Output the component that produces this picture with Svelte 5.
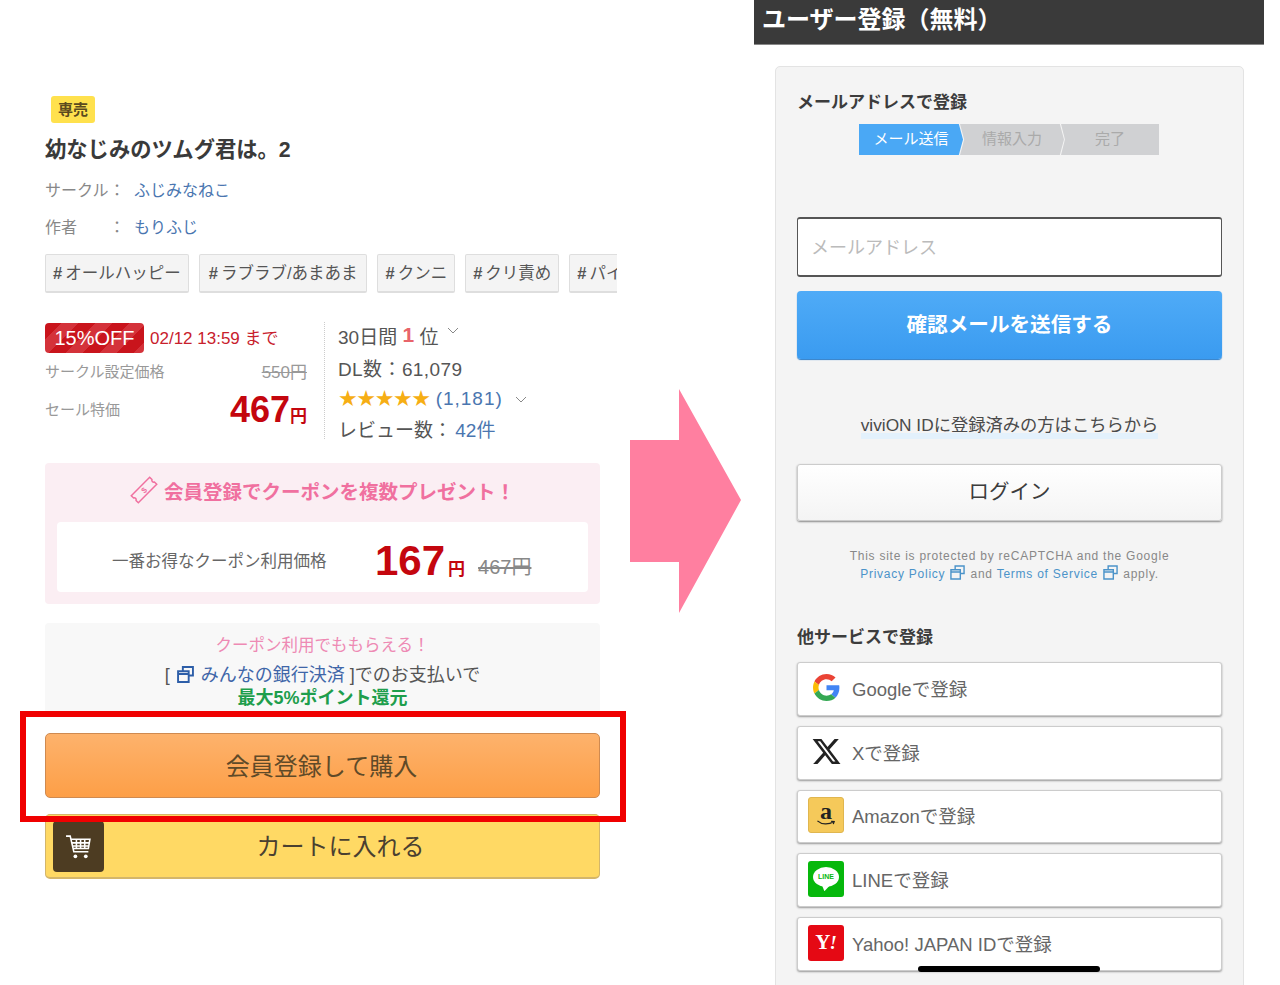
<script>
	const tags = ['オールハッピー', 'ラブラブ/あまあま', 'クンニ', 'クリ責め', 'パイズリ'];
	const steps = [
		{ label: 'メール送信', active: true },
		{ label: '情報入力', active: false },
		{ label: '完了', active: false }
	];
</script>

<div class="page">
	<section class="product">
		<span class="badge">専売</span>
		<h1>幼なじみのツムグ君は。2</h1>
		<div class="meta"><span class="key">サークル</span><span class="colon">：</span><span class="link">ふじみなねこ</span></div>
		<div class="meta second"><span class="key">作者</span><span class="colon">：</span><span class="link">もりふじ</span></div>
		<div class="tags">
			{#each tags as tag}
				<span class="tag"><b>#</b>{tag}</span>
			{/each}
		</div>

		<div class="prices">
			<div class="price-left">
				<div class="sale-row">
					<span class="off">15%OFF</span>
					<span class="until">02/12 13:59 まで</span>
				</div>
				<div class="price-row list">
					<span>サークル設定価格</span>
					<s>550円</s>
				</div>
				<div class="price-row now">
					<span>セール特価</span>
					<strong>467<small>円</small></strong>
				</div>
			</div>
			<div class="price-right">
				<div class="stat rank">30日間 <em>1</em> 位 <svg class="chev up" viewBox="0 0 12 7"><path d="M1 1l5 5 5-5" /></svg></div>
				<div class="stat dl">DL数：61,079</div>
				<div class="stat stars"><span class="star-row">★★★★★</span><span class="link count">(1,181)</span><svg class="chev" viewBox="0 0 12 7"><path d="M1 1l5 5 5-5" /></svg></div>
				<div class="stat reviews">レビュー数： <span class="link">42件</span></div>
			</div>
		</div>

		<div class="coupon">
			<div class="coupon-title">
				<svg class="ticket" viewBox="0 0 28 28">
					<g transform="rotate(-45 14 14)">
						<path d="M1 9h26v3.2a2 2 0 0 0 0 3.6V19H1v-3.2a2 2 0 0 0 0-3.6z" />
						<text x="14" y="17" text-anchor="middle">$</text>
					</g>
				</svg>
				<span>会員登録でクーポンを複数プレゼント！</span>
			</div>
			<div class="coupon-box">
				<span class="coupon-label">一番お得なクーポン利用価格</span>
				<strong>167<small>円</small></strong>
				<s>467円</s>
			</div>
		</div>

		<div class="bank">
			<div class="bank-pink">クーポン利用でももらえる！</div>
			<div class="bank-line">[ <svg class="ext" viewBox="0 0 16 16"><path d="M5.5 4.5V1h9.500v8h-4M1 5h10v10H1zM1 5h10v2.500H1z" /></svg> <span class="bank-link">みんなの銀行決済</span> ]でのお支払いで</div>
			<div class="bank-green">最大5%ポイント還元</div>
		</div>

		<div class="buy">会員登録して購入</div>
		<div class="cart">
			<span class="cart-icon">
				<svg viewBox="0 0 26 26">
					<path d="M1 3h4l3.500 15h14M6 6h18l-1.500 9H8M11 6v9M15 6v9M19 6v9M7 9.500h16.500M7.500 12.500h15.500" />
					<circle cx="10" cy="22.500" r="1.800" />
					<circle cx="20" cy="22.500" r="1.800" />
				</svg>
			</span>
			<span class="cart-label">カートに入れる</span>
		</div>

		<div class="highlight"></div>
	</section>

	<svg class="arrow" viewBox="0 0 111 224"><polygon points="0,51 49,51 49,0 111,111 49,224 49,173 0,173" /></svg>

	<section class="register">
		<header>ユーザー登録（無料）</header>
		<div class="card">
			<h2>メールアドレスで登録</h2>
			<div class="steps">
				{#each steps as step}
					<span class="step" class:active={step.active}>{step.label}</span>
				{/each}
			</div>
			<div class="input">メールアドレス</div>
			<div class="send">確認メールを送信する</div>
			<div class="vivion"><span>viviON IDに登録済みの方はこちらから</span></div>
			<div class="login">ログイン</div>
			<p class="captcha">
				This site is protected by reCAPTCHA and the Google<br />
				<span class="blue">Privacy Policy</span>
				<svg class="ext small" viewBox="0 0 16 16"><path d="M5.500 4.500V1h9.500v8h-4M1 5h10v10H1zM1 5h10v2.500H1z" /></svg>
				and <span class="blue">Terms of Service</span>
				<svg class="ext small" viewBox="0 0 16 16"><path d="M5.500 4.500V1h9.500v8h-4M1 5h10v10H1zM1 5h10v2.500H1z" /></svg>
				apply.
			</p>
			<h2 class="others">他サービスで登録</h2>
			<div class="services">
				<div class="service">
					<span class="logo">
						<svg class="google" viewBox="0 0 48 48">
							<path fill="#EA4335" d="M24 9.500c3.540 0 6.710 1.220 9.210 3.600l6.850-6.850C35.900 2.380 30.470 0 24 0 14.620 0 6.510 5.380 2.560 13.220l7.980 6.190C12.430 13.720 17.740 9.500 24 9.500z" />
							<path fill="#4285F4" d="M46.980 24.550c0-1.570-.150-3.090-.380-4.550H24v9.020h12.940c-.580 2.960-2.260 5.480-4.780 7.180l7.730 6c4.510-4.180 7.090-10.360 7.090-17.650z" />
							<path fill="#FBBC05" d="M10.530 28.590c-.480-1.450-.760-2.990-.760-4.590s.270-3.140.760-4.590l-7.980-6.190C.920 16.460 0 20.120 0 24c0 3.880.920 7.540 2.560 10.780l7.970-6.190z" />
							<path fill="#34A853" d="M24 48c6.480 0 11.930-2.130 15.890-5.810l-7.730-6c-2.150 1.450-4.920 2.300-8.160 2.300-6.260 0-11.570-4.220-13.470-9.910l-7.980 6.190C6.510 42.620 14.620 48 24 48z" />
						</svg>
					</span>
					Googleで登録
				</div>
				<div class="service">
					<span class="logo">
						<svg class="x" viewBox="0 0 24 24"><path d="M18.244 2.250h3.308l-7.227 8.260 8.502 11.240H16.170l-5.214-6.817L4.990 21.750H1.680l7.730-8.835L1.254 2.250H8.080l4.713 6.231zm-1.161 17.520h1.833L7.084 4.126H5.117z" /></svg>
					</span>
					Xで登録
				</div>
				<div class="service">
					<span class="logo tile amazon">
						<span class="a">a</span>
						<svg viewBox="0 0 22 7"><path d="M1 1c5 4.500 13 4.500 19 1M17 1.500l3.500.3-1 3" /></svg>
					</span>
					Amazonで登録
				</div>
				<div class="service">
					<span class="logo tile line">
						<span class="bubble">LINE</span>
						<span class="tail"></span>
					</span>
					LINEで登録
				</div>
				<div class="service">
					<span class="logo tile yahoo">Y<i>!</i></span>
					Yahoo! JAPAN IDで登録
				</div>
			</div>
		</div>
		<div class="home-bar"></div>
	</section>
</div>

<style>
	:global(body) {
		margin: 0;
		background: #fff;
	}

	.page {
		display: flex;
		align-items: flex-start;
		width: 1280px;
		height: 985px;
		overflow: hidden;
		font-family: "Liberation Sans", "Noto Sans CJK JP", sans-serif;
		color: #444;
	}

	/* left: product page */
	.product {
		position: relative;
		box-sizing: border-box;
		width: 555px;
		margin-left: 45px;
		padding-top: 96px;
		flex: none;
	}
	.badge {
		display: block;
		box-sizing: border-box;
		width: 44px;
		height: 27px;
		margin-left: 6px;
		background: #ffe14d;
		border-radius: 3px;
		color: #5b4a1e;
		font-size: 15px;
		font-weight: 700;
		line-height: 27px;
		text-align: center;
	}
	h1 {
		margin: 11px 0 0;
		color: #3a3a3a;
		font-size: 21.300px;
		font-weight: 700;
		line-height: 32px;
	}
	.meta {
		display: flex;
		margin-top: 13px;
		font-size: 16px;
		line-height: 24px;
		color: #888;
	}
	.key {
		width: 64px;
	}
	.colon {
		width: 25px;
	}
	.link {
		color: #4a76b0;
	}
	.tags {
		display: flex;
		gap: 10px;
		width: 572px;
		margin-top: 14px;
		overflow: hidden;
	}
	.tag {
		flex: none;
		box-sizing: border-box;
		height: 39px;
		padding: 0 7px;
		background: #f4f4f4;
		border: 1px solid #dedede;
		border-bottom-width: 2px;
		border-radius: 2px;
		color: #555;
		font-size: 16.500px;
		line-height: 37px;
	}
	.tag:nth-child(2) {
		padding: 0 9px;
	}
	.tag b {
		margin-right: 3px;
		font-weight: 700;
	}

	.prices {
		display: flex;
		margin-top: 29px;
		height: 119px;
	}
	.price-left {
		box-sizing: border-box;
		width: 280px;
		height: 117px;
		padding-right: 17px;
		border-right: 1px dotted #ccc;
	}
	.sale-row {
		display: flex;
		align-items: center;
		margin-top: 1px;
		height: 30px;
	}
	.off {
		width: 99px;
		height: 30px;
		background: repeating-linear-gradient(135deg, #c9141c 0 12px, #d4323a 12px 24px);
		border-radius: 4px;
		color: #fff;
		font-size: 20px;
		line-height: 30px;
		text-align: center;
	}
	.until {
		margin: 0 0 4px 6px;
		color: #c8202c;
		font-size: 17px;
	}
	.price-row {
		display: flex;
		justify-content: space-between;
		align-items: center;
		color: #999;
		font-size: 15px;
	}
	.list {
		height: 24px;
		margin-top: 5px;
	}
	.list s {
		font-size: 17px;
		color: #999;
	}
	.now {
		margin-top: 7px;
		height: 42px;
	}
	.now span {
		margin-bottom: 4px;
	}
	.now strong {
		color: #c4060e;
		font-size: 36px;
		font-weight: 700;
	}
	.now small {
		font-size: 17px;
	}
	.price-right {
		padding-left: 13px;
		font-size: 19px;
		color: #555;
	}
	.stat {
		display: flex;
		align-items: center;
		box-sizing: border-box;
		height: 30px;
		white-space: pre;
	}
	.rank {
		padding-bottom: 4px;
	}
	.rank em {
		color: #e8646a;
		font-style: normal;
		font-size: 21px;
		font-weight: 700;
	}
	.chev {
		width: 12px;
		height: 7px;
		margin-left: 12px;
		fill: none;
		stroke: #888;
		stroke-width: 1;
	}
	.chev.up {
		margin: -10px 0 0 3px;
	}
	.star-row {
		color: #f6ae14;
		font-family: "DejaVu Sans", sans-serif;
		font-size: 22px;
		letter-spacing: -1.400px;
		line-height: 1;
	}
	.count {
		margin-left: 6px;
		letter-spacing: 1px;
	}
	.dl {
		letter-spacing: 0.400px;
	}
	.dl, .reviews {
		height: 31px;
	}
	.stars {
		position: relative;
		top: 1px;
	}
	.reviews .link {
		margin-left: -2px;
	}

	.coupon {
		box-sizing: border-box;
		height: 141px;
		margin-top: 22px;
		padding: 12px 12px 0;
		background: #fbeef3;
		border-radius: 4px;
	}
	.coupon-title {
		display: flex;
		justify-content: center;
		align-items: center;
		gap: 6px;
		height: 30px;
		color: #f0709f;
		font-size: 19.500px;
		font-weight: 700;
	}
	.ticket {
		width: 28px;
		height: 28px;
		fill: none;
		stroke: #f0709f;
		stroke-width: 1.500;
	}
	.ticket text {
		fill: #f0709f;
		stroke: none;
		font-size: 8px;
	}
	.coupon-box {
		display: flex;
		align-items: center;
		box-sizing: border-box;
		height: 70px;
		margin-top: 17px;
		padding: 6px 0 0 55px;
		background: #fff;
		border-radius: 4px;
		color: #666;
	}
	.coupon-label {
		width: 263px;
		font-size: 16.500px;
		flex: none;
	}
	.coupon-box strong {
		margin-top: 2px;
		color: #c4060e;
		font-size: 42px;
		font-weight: 700;
		line-height: 1;
	}
	.coupon-box small {
		margin-left: 3px;
		font-size: 17px;
	}
	.coupon-box s {
		margin: 10px 0 0 13px;
		color: #888;
		font-size: 20px;
	}

	.bank {
		box-sizing: border-box;
		height: 92px;
		margin-top: 19px;
		padding-top: 11px;
		background: #f8f8f8;
		border-radius: 4px 4px 0 0;
		text-align: center;
		font-size: 16.500px;
		line-height: 23px;
	}
	.bank-pink {
		color: #ee8ab4;
	}
	.bank-line {
		margin-top: 7px;
		color: #555;
		font-size: 18px;
	}
	.bank-link {
		color: #3f66a8;
	}
	.bank-green {
		color: #1e9e4c;
		font-size: 18px;
		font-weight: 700;
	}
	.ext {
		display: inline-block;
		width: 17px;
		height: 17px;
		margin: 0 2px;
		vertical-align: -2px;
		fill: none;
		stroke: #2d5ea8;
		stroke-width: 1.800;
	}
	.ext.small {
		width: 15px;
		height: 15px;
		margin: 0 1px;
		stroke: #4b93c9;
		stroke-width: 1.500;
	}

	.buy, .cart {
		box-sizing: border-box;
		height: 65px;
		border-radius: 5px;
		font-size: 24px;
		line-height: 65px;
		text-align: center;
		color: #5f4a28;
	}
	.buy {
		margin-top: 18px;
		background: linear-gradient(#fdb26c, #fd9f47);
		border: 1px solid #cf8a50;
		padding-right: 2px;
	}
	.cart {
		display: flex;
		align-items: center;
		margin-top: 16px;
		padding-left: 7px;
		background: #ffd964;
		border: 1px solid #d4b66a;
		border-bottom-width: 2px;
		color: #4a4030;
	}
	.cart-icon {
		display: flex;
		justify-content: center;
		align-items: center;
		width: 51px;
		height: 51px;
		margin-top: 1px;
		background: #4d3c22;
		border-radius: 4px;
		flex: none;
	}
	.cart-icon svg {
		width: 27px;
		height: 27px;
		fill: none;
		stroke: #fff;
		stroke-width: 1.500;
	}
	.cart-icon circle {
		fill: #fff;
		stroke: none;
	}
	.cart-label {
		flex: 1;
		padding-right: 22px;
	}
	.highlight {
		position: absolute;
		left: -25px;
		top: 711px;
		box-sizing: border-box;
		width: 606px;
		height: 111px;
		border: 6px solid #f00000;
	}

	/* middle arrow */
	.arrow {
		flex: none;
		width: 111px;
		height: 224px;
		margin: 389px 0 0 30px;
		fill: #ff7fa0;
	}

	/* right: registration */
	.register {
		position: relative;
		flex: none;
		width: 510px;
		margin-left: 13px;
	}
	header {
		box-sizing: border-box;
		height: 45px;
		padding-left: 8px;
		background: #3a3a3a;
		border-bottom: 1px solid #888;
		color: #fff;
		font-size: 24px;
		font-weight: 700;
		line-height: 40px;
	}
	.card {
		box-sizing: border-box;
		width: 469px;
		height: 960px;
		margin: 21px 0 0 21px;
		padding: 24px 21px 0;
		background: #f4f4f4;
		border: 1px solid #e3e3e3;
		border-radius: 5px;
	}
	h2 {
		margin: 0;
		color: #3c3c3c;
		font-size: 17px;
		font-weight: 700;
		line-height: 24px;
	}
	.steps {
		display: flex;
		gap: 1px;
		margin: 9px 0 0 62px;
	}
	.step {
		width: 104px;
		height: 31px;
		margin-right: -4px;
		background: #d0d1d3;
		clip-path: polygon(0 0, 96% 0, 100% 50%, 96% 100%, 0 100%, 4% 50%);
		color: #aaa;
		font-size: 15px;
		line-height: 30px;
		text-align: center;
	}
	.step:first-child {
		clip-path: polygon(0 0, 96% 0, 100% 50%, 96% 100%, 0 100%);
	}
	.step:last-child {
		clip-path: polygon(0 0, 100% 0, 100% 100%, 0 100%, 4% 50%);
		width: 98px;
	}
	.step.active {
		background: #4aa8f5;
		color: #fff;
	}
	.input {
		box-sizing: border-box;
		height: 60px;
		margin-top: 62px;
		padding-left: 13px;
		background: #fff;
		border: 1px solid #555;
		border-width: 2px 1px;
		border-radius: 3px;
		color: #bbb;
		font-size: 18px;
		line-height: 58px;
	}
	.send {
		height: 68px;
		margin-top: 14px;
		background: linear-gradient(#4fabf7, #3a9bf0);
		border-radius: 4px;
		box-shadow: 0 1px 1px #2a7cc8;
		color: #fff;
		font-size: 20.600px;
		font-weight: 700;
		line-height: 68px;
		text-align: center;
	}
	.vivion {
		margin-top: 52px;
		font-size: 17.300px;
		line-height: 28px;
		text-align: center;
		color: #4a4a4a;
	}
	.vivion span {
		background: linear-gradient(transparent 80%, #e3f1fc 80%);
		display: inline-block;
	}
	.login {
		box-sizing: border-box;
		height: 57px;
		margin-top: 25px;
		background: linear-gradient(#fff, #f4f4f4);
		border: 1px solid #ccc;
		border-radius: 3px;
		box-shadow: 0 1px 2px #888;
		color: #3c3c3c;
		font-size: 20.500px;
		line-height: 53px;
		text-align: center;
	}
	.captcha {
		margin: 26px 0 0;
		color: #888;
		font-size: 12px;
		letter-spacing: 0.750px;
		line-height: 18px;
		text-align: center;
	}
	.blue {
		color: #4b93c9;
	}
	.others {
		margin-top: 43px;
	}
	.services {
		display: flex;
		flex-direction: column;
		gap: 10px;
		margin-top: 12px;
	}
	.service {
		display: flex;
		align-items: center;
		gap: 8px;
		box-sizing: border-box;
		height: 53.750px;
		padding: 0 0 2px 10px;
		background: #fff;
		border: 1px solid #ccc;
		border-radius: 3px;
		box-shadow: 0 1px 2px #999;
		color: #666;
		font-size: 18.500px;
	}
	.logo {
		display: flex;
		justify-content: center;
		align-items: center;
		width: 36px;
		height: 36px;
		flex: none;
	}
	.tile {
		border-radius: 3px;
	}
	.google {
		width: 27px;
		height: 27px;
	}
	.x {
		width: 31px;
		height: 31px;
		fill: #222;
	}
	.amazon {
		position: relative;
		background: #f5c95a;
		border: 1px solid #e0b64f;
		box-sizing: border-box;
	}
	.amazon .a {
		margin-top: -8px;
		color: #222;
		font-family: "Liberation Serif", serif;
		font-size: 24px;
		font-weight: 700;
		line-height: 1;
	}
	.amazon svg {
		position: absolute;
		left: 7px;
		bottom: 6px;
		width: 20px;
		height: 6px;
		fill: none;
		stroke: #222;
		stroke-width: 1.500;
	}
	.line {
		position: relative;
		background: #06b80c;
	}
	.bubble {
		width: 26px;
		height: 20px;
		margin-top: -5px;
		background: #fff;
		border-radius: 50%;
		color: #06b80c;
		font-size: 7px;
		font-weight: 700;
		line-height: 20px;
		text-align: center;
	}
	.tail {
		position: absolute;
		left: 14px;
		top: 24px;
		width: 8px;
		height: 6px;
		background: #fff;
		clip-path: polygon(0 0, 100% 0, 30% 100%);
	}
	.yahoo {
		background: #e50914;
		color: #fff;
		font-family: "Liberation Serif", serif;
		font-size: 21px;
		font-weight: 700;
	}
	.yahoo i {
		font-size: 19px;
		margin-left: -1px;
	}
	.home-bar {
		position: absolute;
		left: 164px;
		top: 966px;
		width: 182px;
		height: 6px;
		background: #000;
		border-radius: 3px;
	}
</style>
